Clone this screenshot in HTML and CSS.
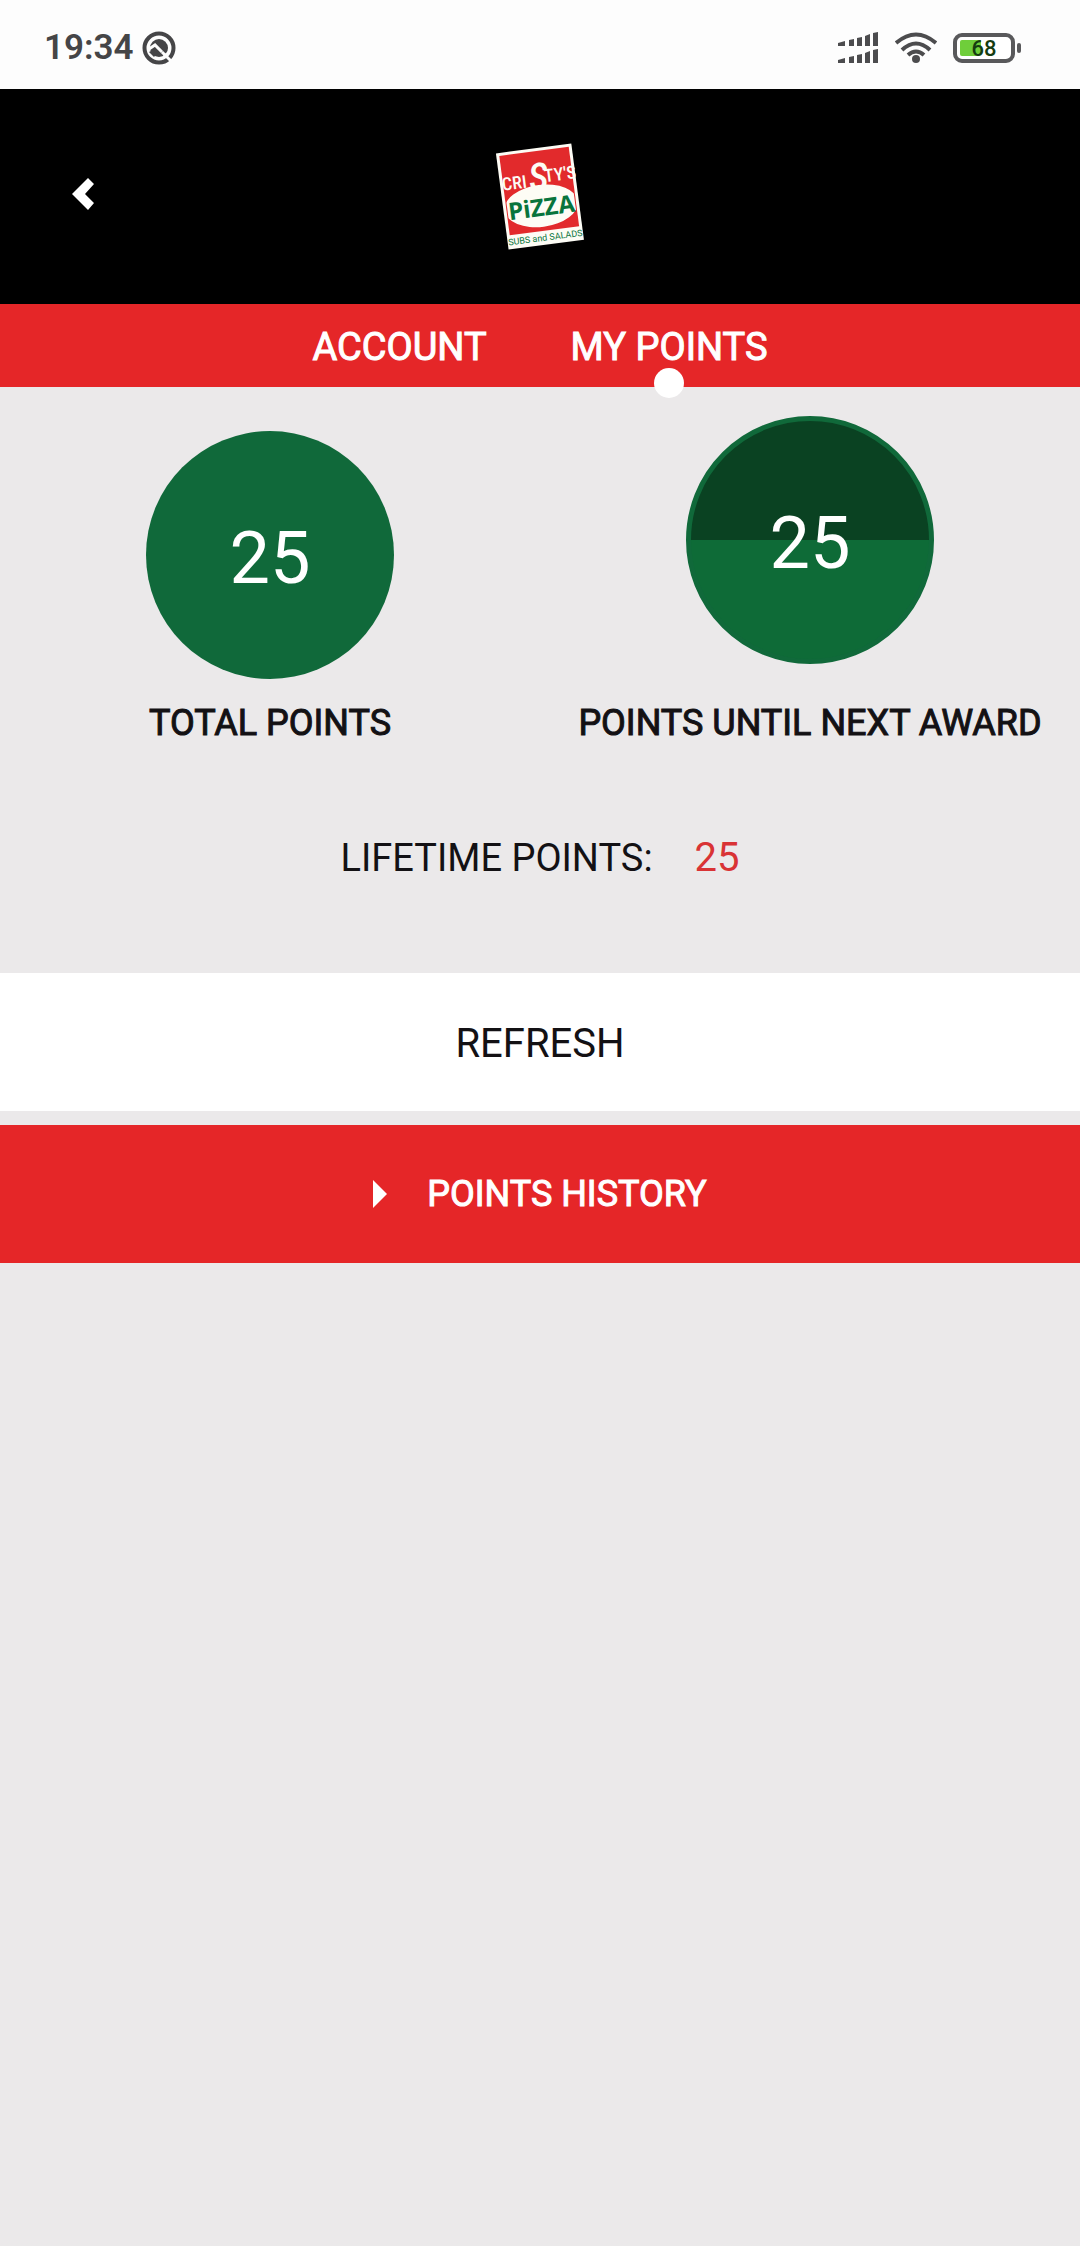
FILE: index.html
```html
<!DOCTYPE html>
<html lang="en">
<head>
<meta charset="utf-8">
<meta name="viewport" content="width=device-width, initial-scale=1">
<title>My Points</title>
<link rel="stylesheet" href="styles.css">
</head>
<body>
<div class="status">
  <div class="status-group">
    <span class="clock">19:34</span>
    <svg class="app-icon" viewBox="0 0 34 34" aria-hidden="true">
      <circle cx="17" cy="17" r="14.5" fill="none" stroke="#454547" stroke-width="4"/>
      <circle cx="17" cy="17" r="9" fill="#454547"/>
      <path d="M7 18l6-4 7 7M22 23l8 8" fill="none" stroke="#fdfdfd" stroke-width="3"/>
      <path d="M20 21l5 5" fill="none" stroke="#fdfdfd" stroke-width="3"/>
      <path d="M7 21l6-3 3 3-4 5z" fill="#454547"/>
    </svg>
  </div>
  <div class="status-group status-right">
    <svg class="signal" viewBox="0 0 42 32" aria-hidden="true" fill="#4c4c4e">
      <path d="M1 11l7-2v5H1zM12 8l5-1v7h-5zM20 6l5-1v9h-5zM28 4l5-2v12h-5zM36 1l5-1v14h-5zM1 28l7-2v5H1zM12 25l5-1v7h-5zM20 23l5-1v9h-5zM28 21l5-2v12h-5zM36 18l5-1v14h-5z"/>
    </svg>
    <svg class="wifi" viewBox="0 0 42 32" aria-hidden="true" fill="none" stroke="#4c4c4e" stroke-width="4">
      <path d="M1 11Q21-6 41 11M7 18Q21 5 35 18M13 23Q21 16 29 23"/>
      <circle cx="21" cy="27" r="4" fill="#4c4c4e" stroke="none"/>
    </svg>
    <svg class="battery" viewBox="0 0 68 30" aria-hidden="true">
      <rect x="2" y="2" width="58" height="26" rx="7" fill="#fff" stroke="#59595b" stroke-width="4"/>
      <rect x="7" y="7" width="21" height="16" rx="2" fill="#6fce3a"/>
      <rect x="64" y="10" width="4" height="10" rx="2" fill="#59595b"/>
      <text class="battery-level" x="31" y="23" text-anchor="middle">68</text>
    </svg>
  </div>
</div>

<header class="header">
  <button class="back" type="button" aria-label="Back">
    <svg class="back-icon" viewBox="0 0 22 32" aria-hidden="true"><path d="M16 0l6 6-9 10 9 9-6 7L0 16z" fill="#fff"/></svg>
  </button>
  <svg class="logo" viewBox="0 0 90 110" role="img" aria-label="Cristy's Pizza">
    <defs><clipPath id="panel"><rect x="-34" y="-45" width="68" height="78"/></clipPath></defs>
    <g transform="translate(45 55) rotate(-7.5)">
      <rect x="-38" y="-49" width="76" height="97" fill="#fdfcf5"/>
      <rect x="-35" y="-46" width="70" height="80" fill="#e22a2c"/>
      <ellipse cx="0" cy="9" rx="37" ry="21" fill="#fdfcf5" clip-path="url(#panel)"/>
      <g class="logo-name">
        <text x="-36" y="-11">CRI</text>
        <text class="logo-swash" x="-9" y="-7">S</text>
        <text x="7" y="-14">TY'S</text>
      </g>
      <text class="logo-pizza" x="0" y="19" text-anchor="middle">PiZZA</text>
      <text class="logo-sub" x="0" y="44" text-anchor="middle">SUBS and SALADS</text>
    </g>
  </svg>
</header>

<nav class="tabs">
  <a class="tab" href="#account">ACCOUNT</a>
  <a class="tab tab-active" href="#points" aria-current="page">MY POINTS</a>
</nav>

<main>
  <section class="meters">
    <div class="meter">
      <div class="disc">25</div>
      <h2 class="label">TOTAL POINTS</h2>
    </div>
    <div class="meter meter-next">
      <div class="disc disc-half">25</div>
      <h2 class="label">POINTS UNTIL NEXT AWARD</h2>
    </div>
  </section>
  <p class="lifetime"><span>LIFETIME POINTS:</span><span class="lifetime-value">25</span></p>
  <div class="actions">
    <button class="action refresh" type="button">REFRESH</button>
    <button class="action history" type="button">
      <svg class="caret" viewBox="0 0 14 28" aria-hidden="true"><path d="M0 0l14 14L0 28z" fill="#fff"/></svg>
      <span>POINTS HISTORY</span>
    </button>
  </div>
</main>
</body>
</html>
```
FILE: styles.css
```css
* { box-sizing: border-box; }
body {
  margin: 0;
  min-height: 100vh;
  background: #ebe9ea;
  color: #131114;
  font-family: Roboto, "Liberation Sans", sans-serif;
  font-size: 40px;
  line-height: 48px;
}
button { border: 0; padding: 0; font: inherit; color: inherit; }

.status {
  display: flex;
  justify-content: space-between;
  align-items: center;
  height: 89px;
  padding: 6px 59px 0 44px;
  background: #fdfdfd;
}
.status-group { display: flex; align-items: center; gap: 8px; }
.status-right { gap: 16px; }
.clock { font-size: 35px; font-weight: 600; color: #454547; }
.app-icon { width: 34px; height: 34px; }
.signal, .wifi { width: 42px; height: 32px; }
.battery { width: 68px; height: 30px; }
.battery-level { font-size: 22px; font-weight: 500; fill: #153c10; }

.header {
  display: grid;
  grid-template-columns: 1fr auto 1fr;
  align-items: center;
  height: 215px;
  background: #000;
}
.back {
  display: flex;
  align-items: center;
  justify-self: start;
  width: 166px;
  height: 120px;
  padding: 0 0 6px 72px;
  background: none;
}
.back-icon { width: 22px; height: 32px; }
.logo { width: 90px; height: 110px; grid-column: 2; }
.logo-name { font: 500 18px "Roboto Condensed", Roboto, sans-serif; fill: #fdfcf5; }
.logo-swash { font-size: 38px; font-style: italic; }
.logo-pizza { font: 700 24px "Open Sans", sans-serif; fill: #08743c; }
.logo-sub { font: 400 9px Roboto, sans-serif; fill: #08743c; }

.tabs {
  display: flex;
  justify-content: center;
  gap: 84px;
  height: 83px;
  padding-top: 19px;
  background: #e52628;
}
.tab { position: relative; color: #fff; font-size: 38px; text-decoration: none; -webkit-text-stroke: 1px; }
.tab-active::after {
  content: "";
  position: absolute;
  left: 50%;
  top: 45px;
  width: 30px;
  height: 30px;
  margin-left: -15px;
  border-radius: 50%;
  background: #fff;
}

.meters { display: grid; grid-template-columns: 1fr 1fr; padding-top: 29px; }
.meter { display: flex; flex-direction: column; align-items: center; justify-content: flex-end; }
.disc {
  width: 248px;
  height: 248px;
  margin-bottom: 20px;
  padding-top: 4px;
  border-radius: 50%;
  background: #10693a;
  color: #fff;
  font-size: 72px;
  line-height: 248px;
  text-align: center;
}
.disc-half {
  margin-bottom: 35px;
  padding: 0;
  border: 5px solid #10693a;
  background: linear-gradient(#0a4222 50%, #0e6b37 50%);
  line-height: 246px;
}
.label { margin: 0; font-size: 36px; font-weight: 400; line-height: 48px; white-space: nowrap; -webkit-text-stroke: 1px; }

.lifetime { display: flex; justify-content: center; gap: 42px; margin: 0; padding: 87px 0 91px; font-size: 38px; }
.lifetime-value { color: #d93335; font-size: 40px; }

.actions { display: grid; gap: 14px; }
.action { display: flex; align-items: center; justify-content: center; width: 100%; height: 138px; }
.refresh { padding-top: 4px; background: #fff; }
.history { gap: 40px; background: #e52628; color: #fff; font-size: 36px; -webkit-text-stroke: 1px; }
.caret { width: 14px; height: 28px; }
```
